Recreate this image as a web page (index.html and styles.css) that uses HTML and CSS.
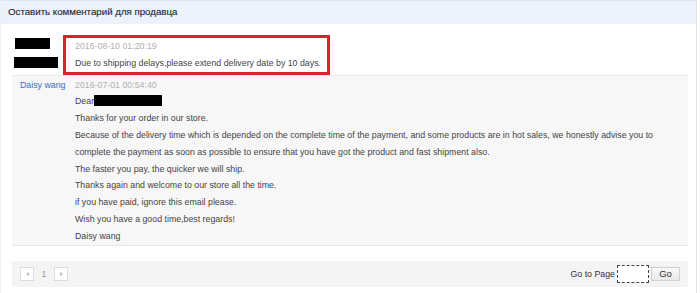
FILE: index.html
```html
<!DOCTYPE html>
<html lang="ru">
<head>
<meta charset="utf-8">
<title>Оставить комментарий для продавца</title>
<link rel="stylesheet" href="styles.css">
</head>
<body>
<div class="panel">
  <div class="panel-head">Оставить комментарий для продавца</div>
  <div class="panel-body">
    <div class="msg msg-buyer">
      <div class="author">
        <span class="redact r1"></span>
        <span class="redact r2"></span>
      </div>
      <div class="content highlighted">
        <div class="date">2016-08-10 01:20:19</div>
        <div class="text">Due to shipping delays,please extend delivery date by 10 days.</div>
      </div>
    </div>
    <div class="msg msg-seller">
      <div class="author"><a class="author-link" href="#">Daisy wang</a></div>
      <div class="content">
        <div class="date">2016-07-01 00:54:40</div>
        <div class="text">
          <p>Dear<span class="redact r3"></span></p>
          <p>Thanks for your order in our store.</p>
          <p>Because of the delivery time which is depended on the complete time of the payment, and some products are in hot sales, we honestly advise you to complete the payment as soon as possible to ensure that you have got the product and fast shipment also.</p>
          <p>The faster you pay, the quicker we will ship.</p>
          <p>Thanks again and welcome to our store all the time.</p>
          <p>if you have paid, ignore this email please.</p>
          <p>Wish you have a good time,best regards!</p>
          <p>Daisy wang</p>
        </div>
      </div>
    </div>
    <div class="pager">
      <div class="pages">
        <span class="pbtn"><span class="tri tri-left"></span></span>
        <span class="pnum">1</span>
        <span class="pbtn"><span class="tri tri-right"></span></span>
      </div>
      <div class="goto">
        <span class="goto-label">Go to Page</span>
        <input class="goto-input" type="text">
        <button class="goto-btn" type="button">Go</button>
      </div>
    </div>
  </div>
</div>
</body>
</html>
```
FILE: styles.css
```css
html, body {
  margin: 0;
  padding: 0;
  background: #ffffff;
}
body {
  font-family: "Liberation Sans", Arial, sans-serif;
  font-size: 8.8px;
  color: #444;
}
.panel {
  width: 697px;
  height: 293px;
  box-sizing: border-box;
  border-left: 1px solid #eef0f3;
  border-right: 1px solid #e3e3e3;
}
.panel-head {
  height: 24px;
  box-sizing: border-box;
  border-top: 1px solid #dce6f3;
  background: #eaf2fc;
  color: #2b2b2b;
  font-size: 9.7px;
  line-height: 22px;
  padding-left: 7px;
  -webkit-text-stroke: 0.15px #2b2b2b;
}
.panel-body {
  padding: 0 8px 0 11px;
}
.msg {
  display: flex;
  line-height: 16.8px;
}
.msg-buyer {
  padding-top: 11px;
}
.msg-buyer .author {
  width: 51px;
  display: flex;
  flex-direction: column;
  padding-top: 3px;
}
.redact {
  display: block;
  background: #000;
}
.r1 {
  width: 35px;
  height: 11px;
  margin-left: 3px;
}
.r2 {
  width: 44px;
  height: 11px;
  margin-left: 2px;
  margin-top: 8px;
}
.r3 {
  display: inline-block;
  width: 68px;
  height: 11px;
  vertical-align: -2px;
}
.highlighted {
  border: 3px solid #d8232e;
  padding: 0 6px 0 9px;
}
.date {
  color: #b0b0b0;
}
.text p {
  margin: 0;
}
.msg-seller {
  margin-top: 0;
  background: #f7f7f7;
  border-top: 1px solid #e7e7e7;
  border-bottom: 1px solid #e7e7e7;
  padding-top: 1px;
}
.msg-seller .author {
  width: 55px;
  padding-left: 8px;
  flex: none;
}
.msg-seller .content {
  flex: 1;
  padding-right: 8px;
}
.author-link {
  color: #3a6cc0;
  text-decoration: none;
}
.pager {
  margin-top: 15px;
  height: 26px;
  background: #f4f4f4;
  display: flex;
  align-items: center;
  justify-content: space-between;
  padding: 0 8px;
}
.pages {
  display: flex;
  align-items: center;
}
.pbtn {
  width: 12px;
  height: 12px;
  border: 1px solid #dcdcdc;
  background: #fff;
  display: flex;
  align-items: center;
  justify-content: center;
}
.pnum {
  width: 20px;
  text-align: center;
  color: #999;
}
.tri {
  width: 0;
  height: 0;
  border-top: 2.5px solid transparent;
  border-bottom: 2.5px solid transparent;
}
.tri-left {
  border-right: 3px solid #bbb;
}
.tri-right {
  border-left: 3px solid #bbb;
}
.goto {
  display: flex;
  align-items: center;
}
.goto-label {
  color: #333;
  margin-right: 2px;
}
.goto-input {
  width: 32px;
  height: 18px;
  box-sizing: border-box;
  border: 1px dashed #444;
  background: #fff;
  margin: 0;
  padding: 0;
}
.goto-btn {
  width: 29px;
  height: 14px;
  box-sizing: border-box;
  margin-left: 2px;
  border: 1px solid #d0d0d0;
  background: linear-gradient(#f8f8f8, #e9e9e9);
  font-family: "Liberation Sans", Arial, sans-serif;
  font-size: 9.5px;
  color: #333;
  padding: 0;
  line-height: 12px;
}
```
